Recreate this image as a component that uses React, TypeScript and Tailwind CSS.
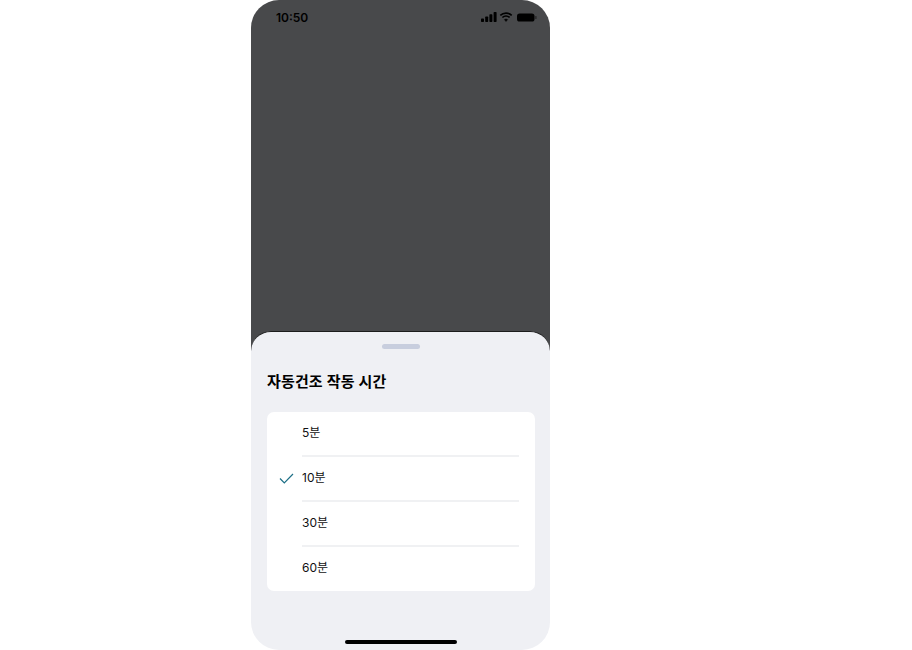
export default function App() {
  const items = ["5분", "10분", "30분", "60분"];
  return (
    <div className="w-[912px] h-[650px] bg-white overflow-hidden font-['Inter','Noto_Sans_CJK_KR',sans-serif]">
      <div className="w-[299px] h-[650px] ml-[251px] flex flex-col">
        <div className="h-[351px] mb-[-20px] shrink-0 rounded-t-[28px] bg-[#48494b] flex items-start justify-between pl-[25px] pr-[13px] pt-[11px]">
          <span className="text-[12px] leading-[14px] font-semibold text-black">10:50</span>
          <div className="flex items-center gap-[2px] mt-[1px]">
            <svg width="16" height="10" viewBox="0 0 16 10" fill="#000">
              <rect x="0" y="6.5" width="3" height="3.5" rx="0.7" />
              <rect x="4.2" y="4.5" width="3" height="5.5" rx="0.7" />
              <rect x="8.4" y="2.2" width="3" height="7.8" rx="0.7" />
              <rect x="12.6" y="0" width="3" height="10" rx="0.7" />
            </svg>
            <svg width="14" height="10" viewBox="0 0 13 10" fill="none" stroke="#000">
              <path d="M0.8 3.4C4 0.3 9 0.3 12.2 3.4" strokeWidth="1.6" />
              <path d="M2.9 5.5C4.9 3.6 8.1 3.6 10.1 5.5" strokeWidth="1.6" />
              <path d="M6.5 9.6L4.8 7.6C5.8 6.8 7.2 6.8 8.2 7.6Z" fill="#000" strokeWidth="0.4" />
            </svg>
            <svg width="20" height="9" viewBox="0 0 20 9" fill="#000" className="ml-[2px]">
              <rect x="0" y="0.5" width="17.5" height="8" rx="2.6" />
              <rect x="18.3" y="3" width="1.2" height="3" rx="0.6" fill="#222" />
            </svg>
          </div>
        </div>
        <div className="flex-1 relative bg-[#eff0f4] rounded-t-[20px] rounded-b-[28px] border-t border-[#1c1c1c] flex flex-col">
          <div className="flex justify-center pt-[12px]">
            <div className="w-[38px] h-[5px] rounded-full bg-[#c8cede]" />
          </div>
          <h2 className="mt-[22px] pl-[16px] text-[15px] leading-[22px] font-semibold text-black tracking-[0.15px]">자동건조 작동 시간</h2>
          <div className="mx-[16px] mt-[19px] w-[268px] bg-white rounded-[7px] flex flex-col">
            {items.map((t, i) => (
              <div key={t} className={i < 3 ? "h-[45px] flex flex-col" : "h-[44px] flex flex-col"}>
                <div className="flex-1 flex items-center">
                  <div className="w-[35px] flex justify-end pr-[8px]">
                    {t === "10분" && (
                      <svg width="15" height="11" viewBox="0 0 15 11" fill="none" stroke="#1d6f86" strokeWidth="1.2">
                        <path d="M1 5.5L5.3 10L14 1" />
                      </svg>
                    )}
                  </div>
                  <span className={i < 3 ? "text-[12px] leading-[18px] text-[#111] mt-[-1px]" : "text-[12px] leading-[18px] text-[#111] mt-[-2px]"}>{t}</span>
                </div>
                {i < 3 && <div className="ml-[35px] mr-[16px] h-[2px] bg-[#f0f1f3]" />}
              </div>
            ))}
          </div>
          <div className="flex-1" />
          <div className="flex justify-center pb-[6px]">
            <div className="w-[112px] h-[4px] rounded-full bg-black" />
          </div>
        </div>
      </div>
    </div>
  );
}
